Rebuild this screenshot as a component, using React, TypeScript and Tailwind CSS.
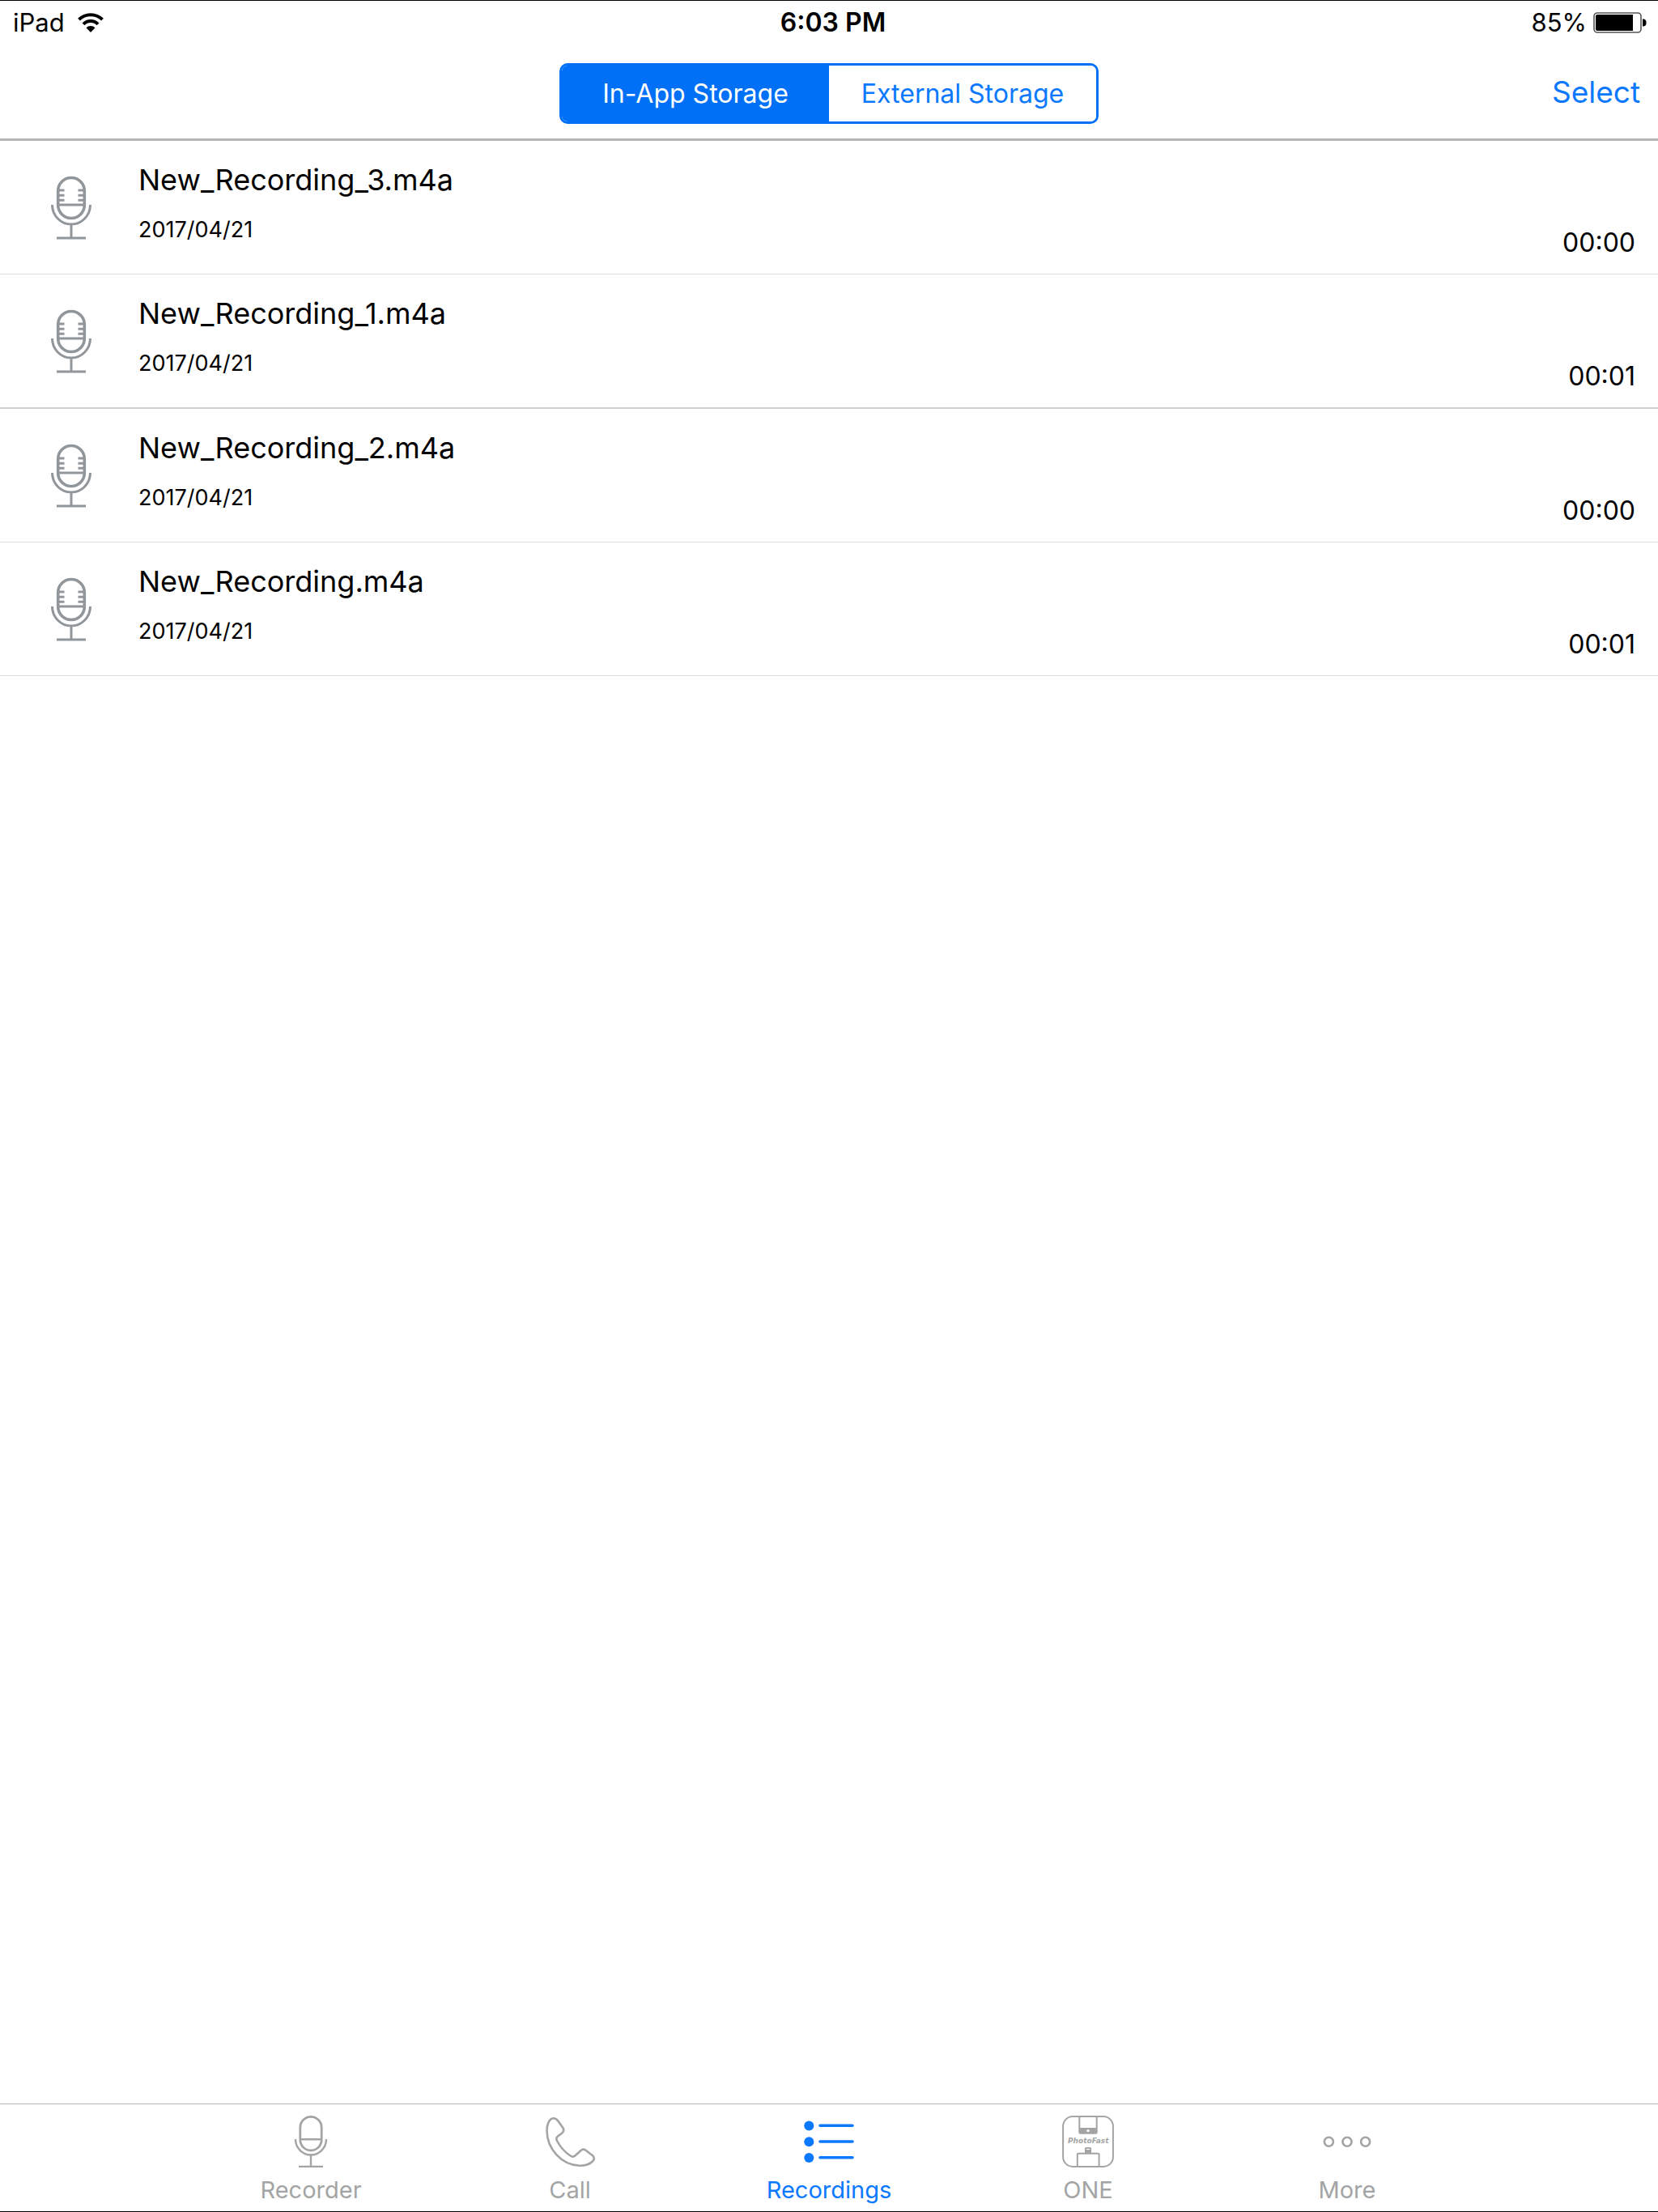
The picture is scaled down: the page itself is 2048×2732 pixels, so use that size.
import React, { useState } from 'react';

type Recording = {
    name: string;
    date: string;
    duration: string;
};

type Tab = {
    label: string;
    icon: React.ReactNode;
};

const recordings: Recording[] = [
    { name: 'New_Recording_3.m4a', date: '2017/04/21', duration: '00:00' },
    { name: 'New_Recording_1.m4a', date: '2017/04/21', duration: '00:01' },
    { name: 'New_Recording_2.m4a', date: '2017/04/21', duration: '00:00' },
    { name: 'New_Recording.m4a', date: '2017/04/21', duration: '00:01' },
];

const storages = ['In-App Storage', 'External Storage'];

const WifiIcon: React.FC = () => (
    <svg viewBox="0 0 32 24" className="h-6 w-8" fill="none" stroke="black" strokeWidth="4">
        <path d="M1.5 8.2a20.5 20.5 0 0 1 29 0" />
        <path d="M7 13.8a12.8 12.8 0 0 1 18 0" />
        <path d="M10.5 18.2a7.8 7.8 0 0 1 11 0L16 24Z" fill="black" stroke="none" />
    </svg>
);

const BatteryIcon: React.FC = () => (
    <svg viewBox="0 0 66 26" className="h-[26px] w-[66px]">
        <rect x="1" y="1" width="58" height="24" rx="4" fill="none" stroke="#555555" strokeWidth="1.6" />
        <path d="M5 3h44v20H5a2 2 0 0 1-2-2V5a2 2 0 0 1 2-2Z" fill="black" />
        <path d="M61 8.5c3.5 0 4.5 1.5 4.5 4.5s-1 4.5-4.5 4.5Z" fill="black" />
    </svg>
);

// Big microphone used at the start of each row
const RowMicIcon: React.FC = () => (
    <svg viewBox="0 0 50 80" className="h-20 w-[50px]" fill="none" stroke="#909699" strokeWidth="3">
        <rect x="8.7" y="2.5" width="32.6" height="50" rx="16.3" strokeWidth="3.6" />
        <path d="M9 36h32M10 18h6.5M10 24.2h6.5M10 30.3h6.5M33.5 18H40M33.5 24.2H40M33.5 30.3H40" />
        <path d="M1.5 36a23.5 24 0 0 0 47 0M25 60v17M7 77h36" />
    </svg>
);

const MicIcon: React.FC = () => (
    <svg viewBox="0 0 64 64" className="size-16" fill="none" stroke="currentColor" strokeWidth="2.4">
        <rect x="18.8" y="1.4" width="26.4" height="41.6" rx="13.2" strokeWidth="2.8" />
        <path d="M19 29.3h26M13 29a19 19.5 0 0 0 38 0M32 48.5v14.5M17 63h30" />
    </svg>
);

const PhoneIcon: React.FC = () => (
    <svg viewBox="0 0 64 64" className="size-16" fill="none" stroke="currentColor" strokeWidth="2.6" strokeLinejoin="round">
        <path d="M11.3 3.3C13.5 3.1 15.5 4.2 17.3 6.5L23 14.5C24.8 17 24.5 19.5 22.3 21.5L17 25.5C15 27 15 29 16 31C20 38.5 25.5 45 32.5 49.5C34.5 51 36.8 51 38.6 49.3L45.5 43C47.5 41.3 49.5 41.3 51.5 42.8L60 49.3C62.3 51.5 62.3 53.8 60.5 56C56 60.5 50 62 43.5 61.7C21.5 60.7 3.5 41 3.5 18C3.5 12 6 3.9 11.3 3.3Z" />
    </svg>
);

const ListIcon: React.FC = () => (
    <svg viewBox="0 0 64 64" className="size-16" fill="currentColor" stroke="currentColor" strokeWidth="3.6" strokeLinecap="round">
        <g stroke="none">
            <circle cx="7.3" cy="12.5" r="6" />
            <circle cx="7.3" cy="32.3" r="6" />
            <circle cx="7.3" cy="52" r="6" />
        </g>
        <path d="M21 12.2h40M21 32h40M21 51.7h40" />
    </svg>
);

const OneIcon: React.FC = () => (
    <svg viewBox="0 0 64 64" className="size-16" fill="none" stroke="currentColor" strokeWidth="2">
        <rect x="1.1" y="1.1" width="61.8" height="61.8" rx="12" />
        <path d="M21.3 1v19.5q0 1.2 1.2 1.2h19q1.2 0 1.2-1.2V1" />
        <path d="M21.3 15h21.4v7H21.3Z" fill="currentColor" stroke="none" />
        <circle cx="32" cy="18.6" r="1.7" fill="white" stroke="none" />
        <text x="7" y="34.3" fill="currentColor" stroke="none" className="font-['DejaVu_Sans'] text-[9px] font-bold italic">
            PhotoFast
        </text>
        <path d="M18.8 63V48q0-1.2 1.2-1.2h24.4q1.2 0 1.2 1.2v15" />
        <path d="M28 46v-5.5q0-1.5 1.5-1.5h5q1.5 0 1.5 1.5V46Z" fill="currentColor" stroke="none" />
        <path d="M30 41.5h4" stroke="white" strokeWidth="1.2" />
    </svg>
);

const MoreIcon: React.FC = () => (
    <svg viewBox="0 0 64 64" className="size-16" fill="none" stroke="currentColor" strokeWidth="2.6">
        <circle cx="9.4" cy="32.3" r="5.5" />
        <circle cx="32" cy="32.3" r="5.5" />
        <circle cx="54.6" cy="32.3" r="5.5" />
    </svg>
);

const tabs: Tab[] = [
    { label: 'Recorder', icon: <MicIcon /> },
    { label: 'Call', icon: <PhoneIcon /> },
    { label: 'Recordings', icon: <ListIcon /> },
    { label: 'ONE', icon: <OneIcon /> },
    { label: 'More', icon: <MoreIcon /> },
];

const App: React.FC = () => {
    const [storage, setStorage] = useState('In-App Storage');
    const [activeTab, setActiveTab] = useState('Recordings');

    return (
        <div className="flex min-h-screen flex-col border-y border-black bg-white font-['Inter',sans-serif] text-black">
            <header className="border-b-3 border-[#b5b5b5]">
                {/* Status bar */}
                <div className="grid h-[54px] grid-cols-[1fr_auto_1fr] items-center pr-3.5 pl-4 text-[31px]">
                    <div className="flex items-center gap-4">
                        <span>iPad</span>
                        <WifiIcon />
                    </div>
                    <span className="pl-2 text-[32px] font-semibold">6:03 PM</span>
                    <div className="flex items-center justify-end gap-2">
                        <span>85%</span>
                        <BatteryIcon />
                    </div>
                </div>

                {/* Storage switch */}
                <div className="grid grid-cols-[1fr_auto_1fr] items-center px-[22px] pt-[23px] pb-[18px]">
                    <div className="col-start-2 grid h-[75px] w-[666px] grid-cols-2 overflow-hidden rounded-[10px] border-3 border-[#0070f7]">
                        {storages.map((item) => (
                            <button
                                key={item}
                                type="button"
                                aria-pressed={storage === item}
                                onClick={() => setStorage(item)}
                                className={`text-[32px] ${storage === item ? 'bg-[#0070f7] text-white' : 'bg-white text-[#0a78ff]'}`}
                            >
                                {item}
                            </button>
                        ))}
                    </div>
                    <button type="button" className="justify-self-end pb-1 text-[37px] leading-12 text-[#0a78ff]">
                        Select
                    </button>
                </div>
            </header>

            <main className="flex-1">
                <ul>
                    {recordings.map((recording) => (
                        <li
                            key={recording.name}
                            className="flex border-b border-[#dcdcdc] pr-7 pl-[63px] nth-2:border-b-2 nth-2:border-[#cfcfcf]"
                        >
                            <div className="pt-[43px]">
                                <RowMicIcon />
                            </div>
                            <div className="flex h-[164px] flex-1 flex-col gap-[18px] pt-6 pl-[58px]">
                                <span className="text-[36px] leading-12">{recording.name}</span>
                                <span className="text-[27px] leading-10">{recording.date}</span>
                            </div>
                            <span className="self-end pb-[18px] text-[32px] leading-10">{recording.duration}</span>
                        </li>
                    ))}
                </ul>
            </main>

            <nav className="flex justify-center border-t border-[#b5b5b5]">
                {tabs.map((tab) => (
                    <button
                        key={tab.label}
                        type="button"
                        onClick={() => setActiveTab(tab.label)}
                        className={`flex w-80 flex-col items-center gap-2.5 pt-3.5 pb-2 ${activeTab === tab.label ? 'text-[#0a78ff]' : 'text-[#a3a5a5]'}`}
                    >
                        {tab.icon}
                        <span className="text-[29px] leading-9">{tab.label}</span>
                    </button>
                ))}
            </nav>
        </div>
    );
};

export default App;
